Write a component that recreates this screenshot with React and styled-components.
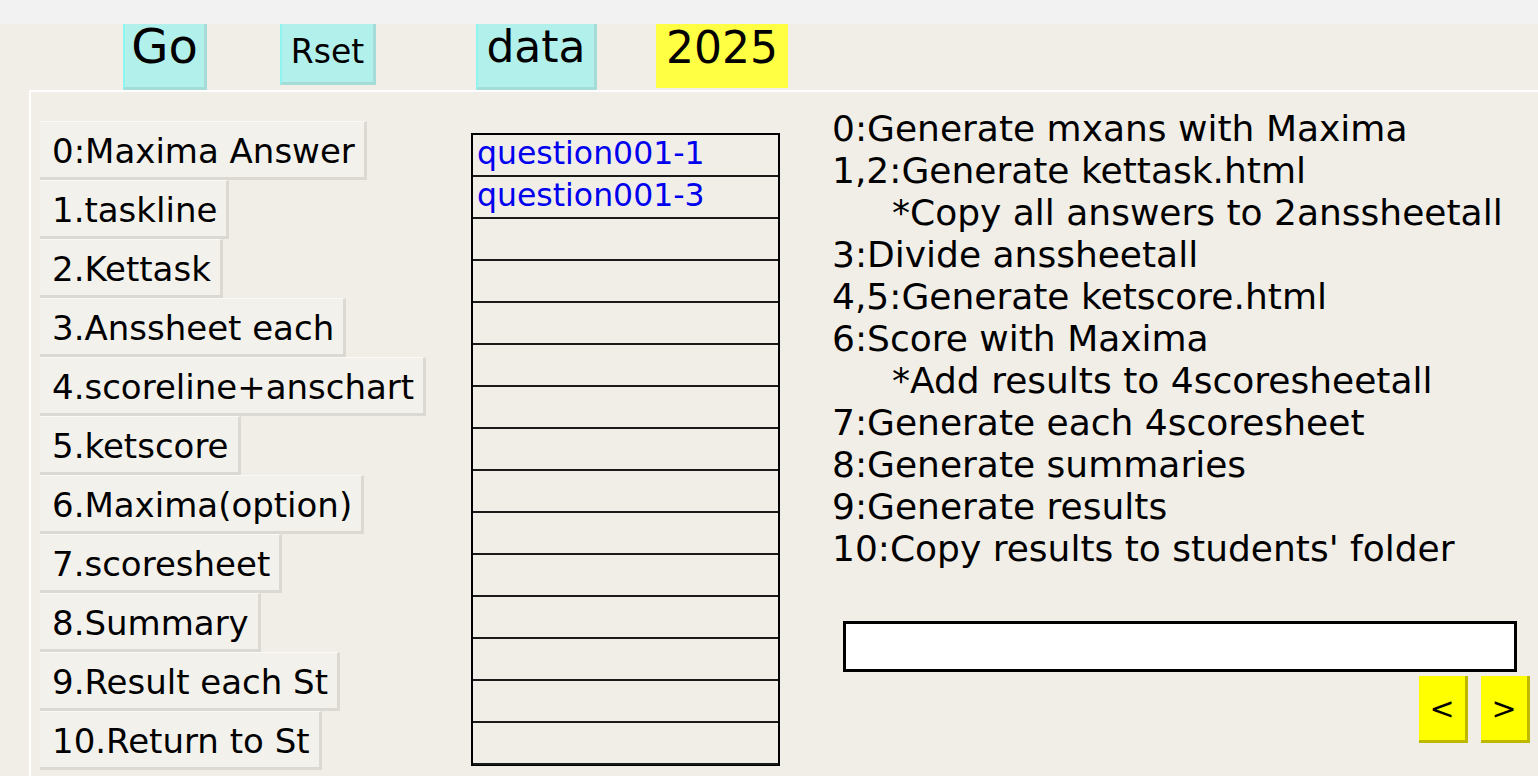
import styled, { createGlobalStyle } from 'styled-components'

const GlobalStyle = createGlobalStyle`
    html, body {
        margin: 0;
        padding: 0;
        background: #f1eee8;
        font-family: "DejaVu Sans", "Liberation Sans", sans-serif;
        overflow: hidden;
    }
`

const STEPS = [
    '0:Maxima Answer',
    '1.taskline',
    '2.Kettask',
    '3.Anssheet each',
    '4.scoreline+anschart',
    '5.ketscore',
    '6.Maxima(option)',
    '7.scoresheet',
    '8.Summary',
    '9.Result each St',
    '10.Return to St',
]

const HELP = [
    { text: '0:Generate mxans with Maxima' },
    { text: '1,2:Generate kettask.html' },
    { text: '*Copy all answers to 2anssheetall', indent: true },
    { text: '3:Divide anssheetall' },
    { text: '4,5:Generate ketscore.html' },
    { text: '6:Score with Maxima' },
    { text: '*Add results to 4scoresheetall', indent: true },
    { text: '7:Generate each 4scoresheet' },
    { text: '8:Generate summaries' },
    { text: '9:Generate results' },
    { text: "10:Copy results to students' folder" },
]

const QUESTIONS = ['question001-1', 'question001-3']

const Page = styled.div`
    width: 1538px;
    height: 776px;
    display: flex;
    flex-direction: column;
`

const TitleStrip = styled.div`
    height: 24px;
    background: #f2f2f2;
    flex-shrink: 0;
`

const Toolbar = styled.div`
    height: 66px;
    display: flex;
    align-items: flex-start;
    padding-left: 123px;
    flex-shrink: 0;
`

const TopButton = styled.button`
    height: ${p => p.$h}px;
    width: ${p => p.$w}px;
    margin-right: ${p => p.$mr}px;
    padding: 0 0 ${p => p.$pb || 0}px;
    font-family: inherit;
    font-size: ${p => p.$fs}px;
    color: #000;
    background: ${p => (p.$yellow ? '#ffff44' : '#b2f0ec')};
    border: none;
    border-left: ${p => (p.$yellow ? 'none' : '2px solid #8ef5f0')};
    border-right: ${p => (p.$yellow ? 'none' : '3px solid #a6dcd7')};
    border-bottom: ${p => (p.$yellow ? 'none' : '3px solid #a6dcd7')};
    display: flex;
    align-items: center;
    justify-content: center;
    cursor: pointer;
`

const Panel = styled.div`
    flex: 1;
    margin-left: 29px;
    border-top: 2px solid #ffffff;
    border-left: 2px solid #ffffff;
    display: flex;
    min-height: 0;
`

const StepColumn = styled.div`
    width: 440px;
    padding: 29px 0 0 9px;
    box-sizing: border-box;
    display: flex;
    flex-direction: column;
    align-items: flex-start;
`

const StepButton = styled.button`
    height: 59px;
    flex-shrink: 0;
    padding: 3px 9px 0 12px;
    font-family: inherit;
    font-size: 34px;
    color: #000;
    background: #f3f1ec;
    border: none;
    border-top: 1px solid #faf9f6;
    border-right: 3px solid #dcd9d2;
    border-bottom: 3px solid #dcd9d2;
    box-sizing: border-box;
    text-align: left;
    white-space: nowrap;
    cursor: pointer;
`

const QuestionList = styled.div`
    width: 309px;
    margin-top: 41px;
    align-self: flex-start;
    border: 2px solid #000;
    border-bottom-width: 1px;
    box-sizing: border-box;
    display: flex;
    flex-direction: column;
`

const QuestionRow = styled.div`
    height: 42px;
    box-sizing: border-box;
    border-bottom: 2px solid #1a1a1a;
    padding-left: 4px;
    font-size: 31.5px;
    color: #0000ee;
    line-height: 36px;
    white-space: nowrap;
`

const InfoColumn = styled.div`
    flex: 1;
    padding: 16px 0 0 52px;
    display: flex;
    flex-direction: column;
`

const HelpLine = styled.div`
    height: 42px;
    line-height: 42px;
    font-size: 36px;
    color: #000;
    white-space: nowrap;
    padding-left: ${p => (p.$indent ? '60px' : '0')};
`

const MessageBox = styled.input`
    margin: 51px 0 0 11px;
    width: 674px;
    height: 51px;
    box-sizing: border-box;
    border: 3px solid #000;
    background: #fff;
    outline: none;
    font-size: 24px;
`

const NavRow = styled.div`
    display: flex;
    justify-content: flex-end;
    gap: 13px;
    margin-top: 4px;
    padding-right: 8px;
`

const NavButton = styled.button`
    width: 49px;
    height: 67px;
    padding: 0;
    background: #ffff00;
    border: none;
    border-right: 3px solid #bdb800;
    border-bottom: 3px solid #bdb800;
    font-family: inherit;
    font-size: 30px;
    color: #000;
    cursor: pointer;
`

const App = () => {
    const rows = Array.from({ length: 15 }, (_, i) => QUESTIONS[i] || '')

    return (
        <Page>
            <GlobalStyle />
            <TitleStrip />
            <Toolbar>
                <TopButton $w={84} $h={66} $mr={73} $fs={48} $pb={20}>Go</TopButton>
                <TopButton $w={96} $h={61} $mr={100} $fs={33} $pb={4}>Rset</TopButton>
                <TopButton $w={121} $h={66} $mr={59} $fs={44} $pb={18}>data</TopButton>
                <TopButton $yellow $w={132} $h={64} $mr={0} $fs={44} $pb={18}>2025</TopButton>
            </Toolbar>
            <Panel>
                <StepColumn>
                    {STEPS.map(s => <StepButton key={s}>{s}</StepButton>)}
                </StepColumn>
                <QuestionList>
                    {rows.map((q, i) => <QuestionRow key={i}>{q}</QuestionRow>)}
                </QuestionList>
                <InfoColumn>
                    {HELP.map(h => <HelpLine key={h.text} $indent={h.indent}>{h.text}</HelpLine>)}
                    <MessageBox type="text" />
                    <NavRow>
                        <NavButton>&lt;</NavButton>
                        <NavButton>&gt;</NavButton>
                    </NavRow>
                </InfoColumn>
            </Panel>
        </Page>
    )
}

export default App
